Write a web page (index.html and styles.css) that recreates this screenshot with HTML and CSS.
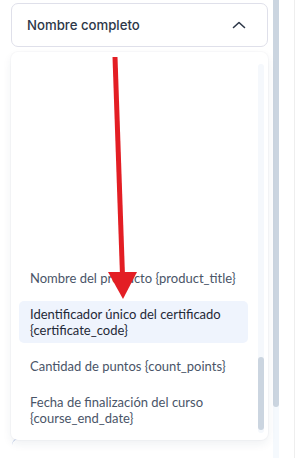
FILE: index.html
```html
<!DOCTYPE html>
<html lang="es">
<head>
  <meta charset="UTF-8">
  <title>Selector de variables</title>
  <link rel="stylesheet" href="styles.css">
</head>
<body>

  <div class="page">
    <div class="main">

      <!-- Select header -->
      <div class="select-box">
        <span class="select-label">Nombre completo</span>
        <svg class="chevron" width="14" height="8" viewBox="0 0 14 8">
          <path d="M1.5 6.5 L7 1.5 L12.5 6.5" fill="none" stroke="#2d3748" stroke-width="1.6" stroke-linecap="round" stroke-linejoin="round"/>
        </svg>
      </div>

      <!-- Dropdown -->
      <div class="dropdown">
        <div class="option-list">
          <div class="option">Nombre del producto {product_title}</div>
          <div class="option active">Identificador único del certificado {certificate_code}</div>
          <div class="option">Cantidad de puntos {count_points}</div>
          <div class="option">Fecha de finalización del curso {course_end_date}</div>
        </div>
        <div class="inner-track">
          <div class="inner-thumb"></div>
        </div>
      </div>
      <div class="under-button"></div>

      <!-- Annotation arrow -->
      <svg class="arrow" width="297" height="458" viewBox="0 0 297 458">
        <line x1="115" y1="57" x2="122.5" y2="276" stroke="#e31e24" stroke-width="5"/>
        <polygon points="108,272 137,272 123,299" fill="#e31e24"/>
      </svg>
    </div>

    <div class="page-scroll">
      <div class="page-thumb"></div>
    </div>
    <div class="page-edge"></div>
  </div>

</body>
</html>
```

FILE: styles.css
```css
body {
  margin: 0;
  background: white;
  font-family: Lato, "Open Sans", sans-serif;
}
.page {
  display: flex;
  height: 458px;
  overflow: hidden;
}
.main {
  width: 257px;
  padding: 3px 5px 0 11px;
  position: relative;
}
.select-box {
  height: 44px;
  box-sizing: border-box;
  border: 1px solid #dfe0ea;
  border-radius: 7px;
  display: flex;
  align-items: center;
  justify-content: space-between;
  padding: 0 21px 0 15px;
  background: white;
}
.select-label {
  font-family: Inter, sans-serif;
  font-size: 13.2px;
  font-weight: 500;
  color: #2d3748;
}
.chevron {
  display: block;
}
.dropdown {
  margin-top: 5px;
  height: 388px;
  background: white;
  border-radius: 7px;
  box-shadow: 0 4px 10px rgba(30, 50, 90, 0.07), 0 0 0 1px rgba(30, 50, 90, 0.025);
  display: flex;
  position: relative;
  z-index: 1;
}
.option-list {
  flex: 1;
  display: flex;
  flex-direction: column;
  justify-content: flex-end;
  gap: 10px;
  padding: 0 10px 9px 8px;
}
.option {
  padding: 5px 11px;
  font-size: 13px;
  line-height: 16px;
  color: #4a5568;
  border-radius: 5px;
}
.option.active {
  background: #eff4fd;
  color: #1f2937;
}
.inner-track {
  width: 6px;
  margin: 12px 4px 7px 0;
  background: #f5f8fc;
  border-radius: 3px;
  display: flex;
  flex-direction: column;
  justify-content: flex-end;
  padding-bottom: 3px;
}
.inner-thumb {
  height: 73px;
  background: #cbd5e0;
  border-radius: 3px;
}
.under-button {
  width: 22px;
  height: 6px;
  margin-top: -2px;
  margin-left: 1px;
  border-top: 1px solid #a9b9dd;
  border-top-left-radius: 8px;
}
.arrow {
  position: absolute;
  top: 0;
  left: 0;
  z-index: 2;
  pointer-events: none;
}
.page-scroll {
  width: 6px;
  background: #f5f9fd;
}
.page-thumb {
  height: 407px;
  background: #cbd5e0;
  border-radius: 0 0 3px 3px;
}
.page-edge {
  width: 1px;
  margin-left: 15px;
  background: #eeeeee;
}
```
